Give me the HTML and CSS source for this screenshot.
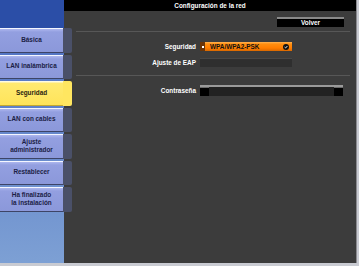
FILE: index.html
```html
<!DOCTYPE html>
<html>
<head>
<meta charset="utf-8">
<link rel="stylesheet" href="styles.css">
</head>
<body>
<div class="screen">
  <div class="sidebar">
    <div class="side-top"></div>
    <div class="menu">
      <div class="btn"><span>Básica</span></div>
      <div class="btn"><span>LAN inalámbrica</span></div>
      <div class="btn active"><span>Seguridad</span></div>
      <div class="btn"><span>LAN con cables</span></div>
      <div class="btn"><span>Ajuste<br>administrador</span></div>
      <div class="btn"><span>Restablecer</span></div>
      <div class="btn"><span>Ha finalizado<br>la instalación</span></div>
    </div>
  </div>
  <div class="panel">
    <div class="title">Configuración de la red</div>
    <div class="content">
      <div class="toprow"><div class="volver">Volver</div></div>
      <div class="sep"></div>
      <div class="row r1">
        <div class="label">Seguridad</div>
        <div class="select">
          <span class="sel-arrow"><i></i></span>
          <span class="sel-text">WPA/WPA2-PSK</span>
          <span class="sel-check">
            <svg width="6" height="6" viewBox="0 0 6 6"><circle cx="3" cy="3" r="3" fill="#111"/><path d="M1.6 3.1 L2.6 4 L4.4 2" stroke="#fff" stroke-width="0.9" fill="none"/></svg>
          </span>
        </div>
      </div>
      <div class="row r2">
        <div class="label">Ajuste de EAP</div>
        <div class="field-dis"></div>
      </div>
      <div class="sep sep2"></div>
      <div class="row r3">
        <div class="label">Contraseña</div>
        <div class="pwd"><span class="cap"></span><span class="mid"></span><span class="cap"></span></div>
      </div>
    </div>
  </div>
</div>
</body>
</html>
```
FILE: styles.css
```css
html, body { margin: 0; padding: 0; }
body {
  width: 359px; height: 266px; overflow: hidden;
  background: #c9cbd2;
  font-family: "Liberation Sans", Arial, sans-serif;
  font-weight: bold;
}
.screen {
  display: flex;
  width: 357px; height: 263px;
}
.sidebar {
  width: 64px;
  flex: none;
  display: flex; flex-direction: column;
  background: linear-gradient(#4e6fc0 28px, #5d7fc8 90px, #7da0d4 100%);
  position: relative;
  z-index: 2;
}
.side-top { height: 28px; background: #2b4ea7; flex: none; }
.menu { display: flex; flex-direction: column; gap: 2px; }
.btn {
  width: 72px; height: 24.5px;
  box-sizing: border-box;
  display: flex; align-items: center;
  background: linear-gradient(90deg, transparent 63px, #4a5068 63px);
  border-radius: 0 2px 2px 0;
}
.btn span {
  width: 63px; height: 100%;
  display: flex; align-items: center; justify-content: center;
  text-align: center;
  font-size: 6.4px; line-height: 8px;
  color: #1b1d45;
  background: linear-gradient(#f4f6ff 0, #f4f6ff 1px, #a9b3ec 1.5px, #939fe0 4px, #8b98da 100%);
  border-bottom: 1px solid #3d4466;
  box-sizing: border-box;
}
.btn.active { background: #ffe660; }
.btn.active span {
  background: linear-gradient(#fffbe0 0, #fffbe0 1px, #ffea70 2px, #ffe45a 100%);
  border-bottom: 1px solid #c4a830;
  color: #2b2410;
}
.panel {
  flex: 1;
  display: flex; flex-direction: column;
  background: #3c3c3c;
  border-right: 1px solid #8b8b90;
}
.title {
  height: 11px; background: #000;
  color: #fff; font-size: 6.4px; line-height: 11px;
  text-align: center;
}
.content { padding: 0 6px 0 12px; position: relative; }
.toprow { display: flex; justify-content: flex-end; padding: 6px 6px 0 0; }
.volver {
  width: 67px; height: 10px;
  box-sizing: border-box;
  background: #000;
  border-top: 2px solid #8a8a8a;
  color: #fff; font-size: 6.4px; line-height: 8px; text-align: center;
}
.sep { height: 1px; background: #575757; margin-top: 4px; }
.row { display: flex; align-items: center; }
.label {
  width: 120px; flex: none;
  text-align: right;
  color: #fff; font-size: 6.4px;
  margin-right: 4px;
}
.r1 { margin-top: 10px; height: 9px; }
.select {
  width: 92px; height: 9px;
  display: flex; align-items: center;
  background: linear-gradient(#ffb455 0, #ff8e10 2px, #ff7d00 6px, #d86800 100%);
  box-sizing: border-box;
}
.sel-arrow {
  width: 5px; height: 9px; background: #6b3508;
  display: flex; align-items: center; justify-content: center;
  flex: none;
}
.sel-arrow i { width: 2px; height: 2px; background: #fff; display: block; }
.sel-text { flex: 1; color: #111; font-size: 6.4px; padding-left: 5px; }
.sel-check { width: 6px; height: 6px; margin-right: 3px; display: flex; }
.r2 { margin-top: 7px; height: 9px; }
.field-dis {
  width: 92px; height: 9px;
  background: #2f2f2f;
  border-top: 1px solid #474747;
  box-sizing: border-box;
}
.sep2 { margin-top: 8px; }
.r3 { margin-top: 9px; height: 11px; }
.pwd {
  width: 143px; height: 11px;
  display: flex;
  border-top: 2px solid #9a9a9a;
  box-sizing: border-box;
  background: #222;
}
.pwd .cap { width: 9px; background: #000; border-top: 1px solid #6a6a6a; flex: none; }
.pwd .mid { flex: 1; background: #222; }
```
